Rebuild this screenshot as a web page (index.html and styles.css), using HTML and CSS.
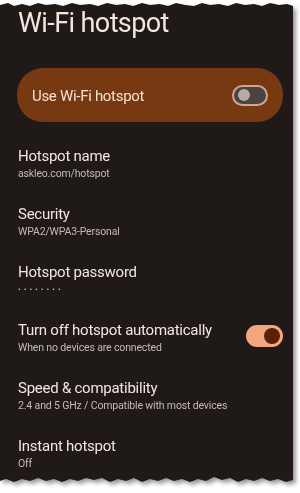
FILE: index.html
```html
<!DOCTYPE html>
<html>
<head>
<meta charset="utf-8">
<link rel="stylesheet" href="styles.css">
</head>
<body>
<div class="shot">
  <div class="panel">
    <h1 class="title">Wi-Fi hotspot</h1>
    <div class="card">
      <span class="card-label">Use Wi-Fi hotspot</span>
      <span class="switch off"><span class="knob"></span></span>
    </div>
    <div class="list">
      <div class="row">
        <div class="text"><div class="label">Hotspot name</div><div class="sub">askleo.com/hotspot</div></div>
      </div>
      <div class="row">
        <div class="text"><div class="label">Security</div><div class="sub">WPA2/WPA3-Personal</div></div>
      </div>
      <div class="row">
        <div class="text"><div class="label">Hotspot password</div><div class="sub dots">••••••••</div></div>
      </div>
      <div class="row">
        <div class="text"><div class="label">Turn off hotspot automatically</div><div class="sub">When no devices are connected</div></div>
        <span class="switch on"><span class="knob"></span></span>
      </div>
      <div class="row">
        <div class="text"><div class="label">Speed &amp; compatibility</div><div class="sub">2.4 and 5 GHz / Compatible with most devices</div></div>
      </div>
      <div class="row">
        <div class="text"><div class="label">Instant hotspot</div><div class="sub">Off</div></div>
      </div>
    </div>
  </div>
</div>
</body>
</html>
```

FILE: styles.css
```css
html, body {
  margin: 0;
  padding: 0;
  background: #ffffff;
}
body {
  width: 300px;
  height: 493px;
  overflow: hidden;
  font-family: Roboto, "Noto Sans", sans-serif;
}
.shot {
  width: 293px;
  filter: drop-shadow(3px 3px 2px rgba(0, 0, 0, 0.4));
}
.panel {
  width: 293px;
  height: 484px;
  box-sizing: border-box;
  background: #1f1a18;
  padding: 6px 10px 0 18px;
  display: flex;
  flex-direction: column;
  clip-path: polygon(
    0 5px, 8px 3px, 14px 6px, 22px 4px, 30px 6px, 38px 3px, 46px 5px, 55px 4px, 63px 6px, 72px 3px,
    80px 5px, 90px 4px, 98px 6px, 107px 3px, 116px 5px, 125px 4px, 133px 6px, 142px 3px, 150px 5px,
    160px 4px, 168px 6px, 176px 3px, 185px 5px, 194px 6px, 202px 3px, 210px 5px, 219px 4px, 228px 6px,
    236px 3px, 245px 5px, 254px 4px, 262px 6px, 270px 3px, 279px 5px, 287px 4px, 293px 6px,
    293px 480px, 286px 482px, 278px 479px, 270px 481px, 262px 478px, 254px 481px, 246px 479px,
    238px 482px, 230px 478px, 222px 480px, 214px 477px, 206px 481px, 198px 479px, 190px 482px,
    182px 479px, 174px 481px, 166px 478px, 158px 481px, 150px 479px, 142px 482px, 134px 478px,
    126px 481px, 118px 479px, 110px 482px, 102px 478px, 94px 480px, 86px 478px, 78px 481px,
    70px 479px, 62px 482px, 54px 479px, 46px 481px, 38px 478px, 30px 481px, 22px 479px,
    14px 482px, 6px 479px, 0 481px
  );
}
.title {
  margin: 0;
  font-weight: 400;
  font-size: 27px;
  line-height: 34px;
  color: #f4e6de;
  letter-spacing: -0.6px;
}
.card {
  margin: 28px 0 0 -1px;
  width: 266px;
  height: 55px;
  box-sizing: border-box;
  border-radius: 26px;
  background: #773912;
  display: flex;
  align-items: center;
  justify-content: space-between;
  padding: 0 15px 0 15px;
}
.card-label {
  font-size: 15px;
  line-height: 20px;
  letter-spacing: -0.3px;
  color: #f6e2d4;
  margin-top: 2px;
}
.switch {
  width: 36px;
  height: 21px;
  box-sizing: border-box;
  border-radius: 11px;
  display: flex;
  align-items: center;
}
.switch.off {
  background: #4b4340;
  border: 2px solid #c9a996;
  padding-left: 4px;
}
.switch.off .knob {
  width: 12px;
  height: 12px;
  border-radius: 50%;
  background: #b9aaa3;
}
.switch.on {
  width: 37px;
  height: 22px;
  background: #f3a77f;
  justify-content: flex-end;
  padding-right: 3px;
}
.switch.on .knob {
  width: 16px;
  height: 16px;
  border-radius: 50%;
  background: #5a2105;
}
.list {
  margin-top: 14px;
  display: flex;
  flex-direction: column;
}
.row {
  height: 58px;
  box-sizing: border-box;
  padding-top: 10px;
  display: flex;
  justify-content: space-between;
  align-items: flex-start;
}
.label {
  font-size: 15px;
  line-height: 20px;
  letter-spacing: -0.25px;
  color: #f4e6de;
}
.sub {
  font-size: 10.5px;
  line-height: 16px;
  letter-spacing: -0.15px;
  color: #c7b9b2;
}
.dots {
  font-size: 8px;
  letter-spacing: 3px;
}
.row .switch.on {
  margin-top: 5px;
}
```
